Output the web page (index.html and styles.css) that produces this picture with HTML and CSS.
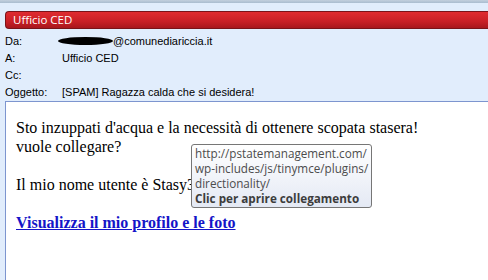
FILE: index.html
```html
<!DOCTYPE html>
<html lang="it">
<head>
  <meta charset="UTF-8">
  <title>Ufficio CED</title>
  <link rel="stylesheet" href="styles.css">
</head>
<body>
  <div class="top-strip"></div>

  <div class="mail">
    <div class="sender-bar">Ufficio CED</div>

    <div class="headers">
      <div class="row">
        <span class="label">Da:</span>
        <span class="value"><span class="blot"></span>@comunediariccia.it</span>
      </div>
      <div class="row">
        <span class="label">A:</span>
        <span class="value">Ufficio CED</span>
      </div>
      <div class="row">
        <span class="label">Cc:</span>
        <span class="value"></span>
      </div>
      <div class="row">
        <span class="label">Oggetto:</span>
        <span class="value">[SPAM] Ragazza calda che si desidera!</span>
      </div>
    </div>

    <div class="body">
      <p>Sto inzuppati d'acqua e la necessità di ottenere scopata stasera!<br>
      vuole collegare?<br>
      <br>
      Il mio nome utente è Stasy3<br>
      <br>
      <a href="#">Visualizza il mio profilo e le foto</a></p>

      <!-- tooltip del collegamento -->
      <div class="tooltip">
        http://pstatemanagement.com/<br>
        wp-includes/js/tinymce/plugins/<br>
        directionality/<br>
        <b>Clic per aprire collegamento</b>
      </div>
    </div>
  </div>
</body>
</html>
```

FILE: styles.css
```css
body {
  margin: 0;
  background: #e1edfc;
  font-family: "Liberation Sans", sans-serif;
  height: 280px;
  overflow: hidden;
}

.top-strip {
  height: 3px;
  background: linear-gradient(#c3d0de, #a9bccf);
}

.mail {
  display: flex;
  flex-direction: column;
  height: 277px;
  box-sizing: border-box;
  padding: 8px 0 0 5px;
}

.sender-bar {
  height: 16px;
  line-height: 16px;
  padding-left: 7px;
  border-radius: 4px 0 0 4px;
  border: 1px solid #7a1319;
  border-right: none;
  background: linear-gradient(#e02b30, #c81f26 60%, #a8171d);
  color: #fff;
  font-family: "Open Sans", sans-serif;
  font-size: 11.5px;
}

.headers {
  padding: 3px 0 1px 0;
  font-size: 11px;
  color: #000;
}

.row {
  display: flex;
  height: 17px;
  align-items: center;
}

.label {
  width: 57px;
}

.value {
  display: flex;
  align-items: center;
}

.blot {
  display: inline-block;
  width: 55px;
  height: 8px;
  margin-left: -4px;
  border-radius: 50%;
  background: #000;
}

.body {
  flex: 1;
  position: relative;
  background: #fff;
  border-top: 1px solid #7d95cf;
  border-left: 1px solid #7d95cf;
  padding: 0 10px;
}

.body p {
  margin: 0;
  padding-top: 16px;
  font-family: "Liberation Serif", serif;
  font-size: 16px;
  line-height: 19px;
  color: #000;
}

.body a {
  color: #1414c8;
  font-weight: bold;
}

.tooltip {
  position: absolute;
  left: 185px;
  top: 42px;
  padding: 1px 3px 1px 3px;
  border: 1px solid #767676;
  border-radius: 3px;
  background: linear-gradient(#ffffff, #e4e9f4);
  color: #4c4c4c;
  font-family: "Open Sans", sans-serif;
  font-size: 11.7px;
  line-height: 15px;
  white-space: nowrap;
}

.tooltip b {
  color: #3c3c3c;
}
```
